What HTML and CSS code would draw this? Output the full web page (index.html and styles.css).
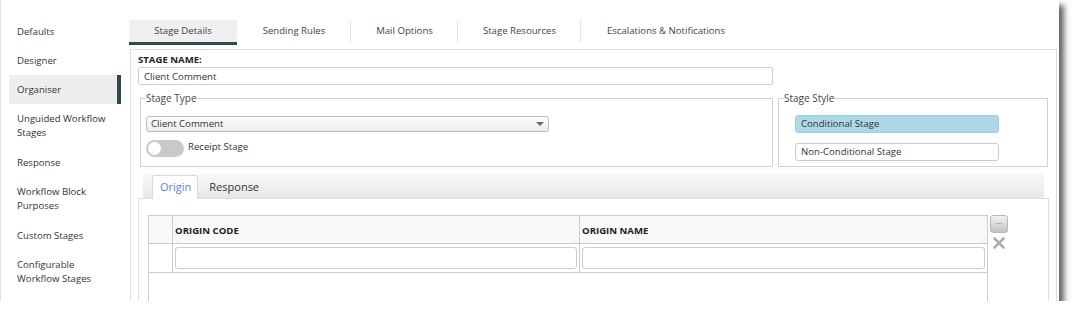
FILE: index.html
```html
<!DOCTYPE html>
<html lang="en">
<head>
  <meta charset="UTF-8">
  <title>Organiser - Stage Details</title>
  <link rel="stylesheet" href="styles.css">
</head>
<body>

  <div class="window">
    <nav class="sidebar">
      <div class="side-item">Defaults</div>
      <div class="side-item">Designer</div>
      <div class="side-item active">Organiser</div>
      <div class="side-item two">Unguided Workflow<br>Stages</div>
      <div class="side-item">Response</div>
      <div class="side-item two">Workflow Block<br>Purposes</div>
      <div class="side-item">Custom Stages</div>
      <div class="side-item two">Configurable<br>Workflow Stages</div>
    </nav>

    <main class="main">
      <div class="tabs">
        <div class="tab tab-details active">Stage Details</div>
        <div class="tab tab-sending sep">Sending Rules</div>
        <div class="tab tab-mail sep">Mail Options</div>
        <div class="tab tab-resources sep">Stage Resources</div>
        <div class="tab tab-escalations">Escalations &amp; Notifications</div>
      </div>

      <div class="details">
        <div class="field-label">STAGE NAME:</div>
        <input class="text-input name-input" type="text" value="Client Comment">

        <div class="fieldsets">
          <fieldset class="stage-type">
            <legend>Stage Type</legend>
            <div class="select">Client Comment<span class="arrow"></span></div>
            <label class="toggle-row">
              <span class="toggle"><span class="knob"></span></span>
              Receipt Stage
            </label>
          </fieldset>

          <fieldset class="stage-style">
            <legend>Stage Style</legend>
            <div class="style-option selected">Conditional Stage</div>
            <div class="style-option">Non-Conditional Stage</div>
          </fieldset>
        </div>

        <div class="subtabs">
          <div class="subtab-bar">
            <div class="subtab active">Origin</div>
            <div class="subtab">Response</div>
          </div>
          <div class="subtab-panel">
            <div class="grid-wrap">
              <div class="grid">
                <table>
                  <tr class="head">
                    <th class="num"></th>
                    <th class="code">ORIGIN CODE</th>
                    <th>ORIGIN NAME</th>
                  </tr>
                  <tr>
                    <td class="num"></td>
                    <td><input class="text-input cell-input" type="text"></td>
                    <td><input class="text-input cell-input" type="text"></td>
                  </tr>
                </table>
              </div>
              <div class="grid-tools">
                <button class="more-btn">...</button>
                <svg class="remove" width="12" height="12" viewBox="0 0 12 12">
                  <path d="M1.5 1.5 L10.5 10.5 M10.5 1.5 L1.5 10.5" stroke="#adadad" stroke-width="2.6" stroke-linecap="round"/>
                </svg>
              </div>
            </div>
          </div>
        </div>
      </div>
    </main>
  </div>

</body>
</html>
```

FILE: styles.css
```css
  body {
    margin: 0;
    background-color: #fff;
    font-family: "Open Sans", "Liberation Sans", sans-serif;
    font-size: 9.6px;
    color: #333;
  }

  .window {
    width: 1059px;
    height: 301px;
    display: flex;
    box-sizing: border-box;
    background-color: #fff;
    border-left: 1px solid #e2e2e2;
    box-shadow: 5px 5px 6px rgba(0, 0, 0, 0.62);
    overflow: hidden;
  }

  /* left menu */
  .sidebar {
    width: 129px;
    flex-shrink: 0;
    padding-top: 17px;
  }

  .side-item {
    box-sizing: border-box;
    width: 112px;
    margin-left: 8px;
    padding: 8px 0 7px 8px;
    line-height: 14px;
    border-right: 4px solid transparent;
  }

  .side-item.two {
    padding-bottom: 8px;
  }

  .side-item.active {
    background-color: #eee;
    border-right-color: #2e4a4f;
  }

  /* main area */
  .main {
    flex: 1;
    min-width: 0;
    padding-top: 20px;
  }

  .tabs {
    display: flex;
    margin-left: -1px;
  }

  .tab {
    height: 22px;
    line-height: 22px;
    text-align: center;
    color: #444;
    border-bottom: 3px solid transparent;
  }

  .tab-details { width: 108px; }
  .tab-sending { width: 114px; }
  .tab-mail { width: 107px; }
  .tab-resources { width: 123px; }
  .tab-escalations { width: 170px; }

  .tab.sep {
    background: linear-gradient(#e2e2e2, #e2e2e2) right top / 1px 22px no-repeat;
  }

  .tab.active {
    background-color: #efefef;
    border-bottom-color: #2e4a4f;
  }

  .details {
    height: 260px;
    margin: 4px 2px 0 0;
    padding: 4px 7px 0 7px;
    border: 1px solid #ddd;
    border-bottom: none;
  }

  .field-label {
    font-weight: bold;
    line-height: 12px;
    color: #222;
  }

  .text-input {
    display: block;
    box-sizing: border-box;
    border: 1px solid #ccc;
    border-radius: 3px;
    padding: 0 5px;
    font-family: inherit;
    font-size: 9.6px;
    color: #333;
    background-color: #fff;
    outline: none;
  }

  .name-input {
    width: 635px;
    height: 18px;
    margin-top: 1px;
  }

  .fieldsets {
    display: flex;
    gap: 5px;
    margin-top: 7px;
  }

  fieldset {
    margin: 0;
    padding: 12px 5px 9px 5px;
    border: 1px solid #d2d2d2;
    box-sizing: border-box;
  }

  legend {
    padding: 0;
    font-size: 10px;
    line-height: 12px;
    color: #444;
  }

  .stage-type {
    width: 633px;
    margin-left: 2px;
  }

  .select {
    position: relative;
    box-sizing: border-box;
    width: 403px;
    height: 16px;
    line-height: 14px;
    padding-left: 4px;
    border: 1px solid #bbb;
    border-radius: 3px;
    background: linear-gradient(#fdfdfd, #ededed);
  }

  .arrow {
    position: absolute;
    right: 4px;
    top: 5px;
    border-top: 4px solid #666;
    border-left: 4px solid transparent;
    border-right: 4px solid transparent;
  }

  .toggle-row {
    display: flex;
    align-items: flex-start;
    gap: 4px;
    margin-top: 8px;
    line-height: 14px;
  }

  .toggle {
    position: relative;
    width: 38px;
    height: 17px;
    border-radius: 9px;
    background-color: #c9c9c9;
  }

  .knob {
    position: absolute;
    left: 2px;
    top: 2px;
    width: 13px;
    height: 13px;
    border-radius: 50%;
    background-color: #fff;
  }

  .stage-style {
    width: 270px;
    padding-top: 11px;
    padding-bottom: 5px;
  }

  .style-option {
    box-sizing: border-box;
    width: 204px;
    height: 18px;
    margin-left: 11px;
    padding-left: 5px;
    line-height: 16px;
    border: 1px solid #ccc;
    border-radius: 3px;
    background-color: #fff;
  }

  .style-option.selected {
    background-color: #add8e6;
    border-color: #a3cfdd;
  }

  .style-option + .style-option {
    margin-top: 10px;
  }

  /* origin / response tabs */
  .subtabs {
    margin-top: 6px;
  }

  .subtab-bar {
    display: flex;
    align-items: flex-end;
    height: 25px;
    margin: 0 5px;
    padding-left: 9px;
    background: linear-gradient(#fafafa, #e7e7e7);
  }

  .subtab {
    height: 22px;
    line-height: 21px;
    padding: 0 11px;
    font-size: 11px;
    color: #333;
  }

  .subtab.active {
    position: relative;
    height: 23px;
    margin-bottom: -1px;
    padding: 0 6px 0 7px;
    color: #6a7cd8;
    background-color: #fff;
    border: 1px solid #d8d8d8;
    border-bottom: none;
    border-radius: 3px 3px 0 0;
  }

  .subtab-panel {
    height: 200px;
    padding: 16px 0 0 9px;
    border: 1px solid #ddd;
    border-bottom: none;
  }

  .grid-wrap {
    display: flex;
    gap: 2px;
  }

  .grid {
    width: 840px;
    height: 120px;
    box-sizing: border-box;
    border: 1px solid #ccc;
    border-bottom: none;
  }

  table {
    width: 100%;
    border-collapse: collapse;
  }

  th {
    height: 25px;
    padding: 2px 0 0 2px;
    text-align: left;
    font-weight: bold;
    color: #222;
    background-color: #f8f8f8;
    border-bottom: 1px solid #ccc;
    border-left: 1px solid #ccc;
  }

  td {
    height: 28px;
    padding: 0 2px;
    border-bottom: 1px solid #ccc;
    border-left: 1px solid #ccc;
  }

  th.num, td.num {
    width: 23px;
    border-left: none;
    padding: 0;
  }

  th.code {
    width: 404px;
  }

  .cell-input {
    width: 100%;
    height: 22px;
  }

  .grid-tools {
    display: flex;
    flex-direction: column;
    align-items: center;
    width: 18px;
  }

  .more-btn {
    width: 18px;
    height: 18px;
    padding: 0 0 4px;
    border: 1px solid #b8b8b8;
    border-radius: 3px;
    background: linear-gradient(#f3f3f3, #c2c2c2);
    font-size: 8px;
    line-height: 8px;
    color: #555;
  }

  .remove {
    margin-top: 4px;
  }
```
